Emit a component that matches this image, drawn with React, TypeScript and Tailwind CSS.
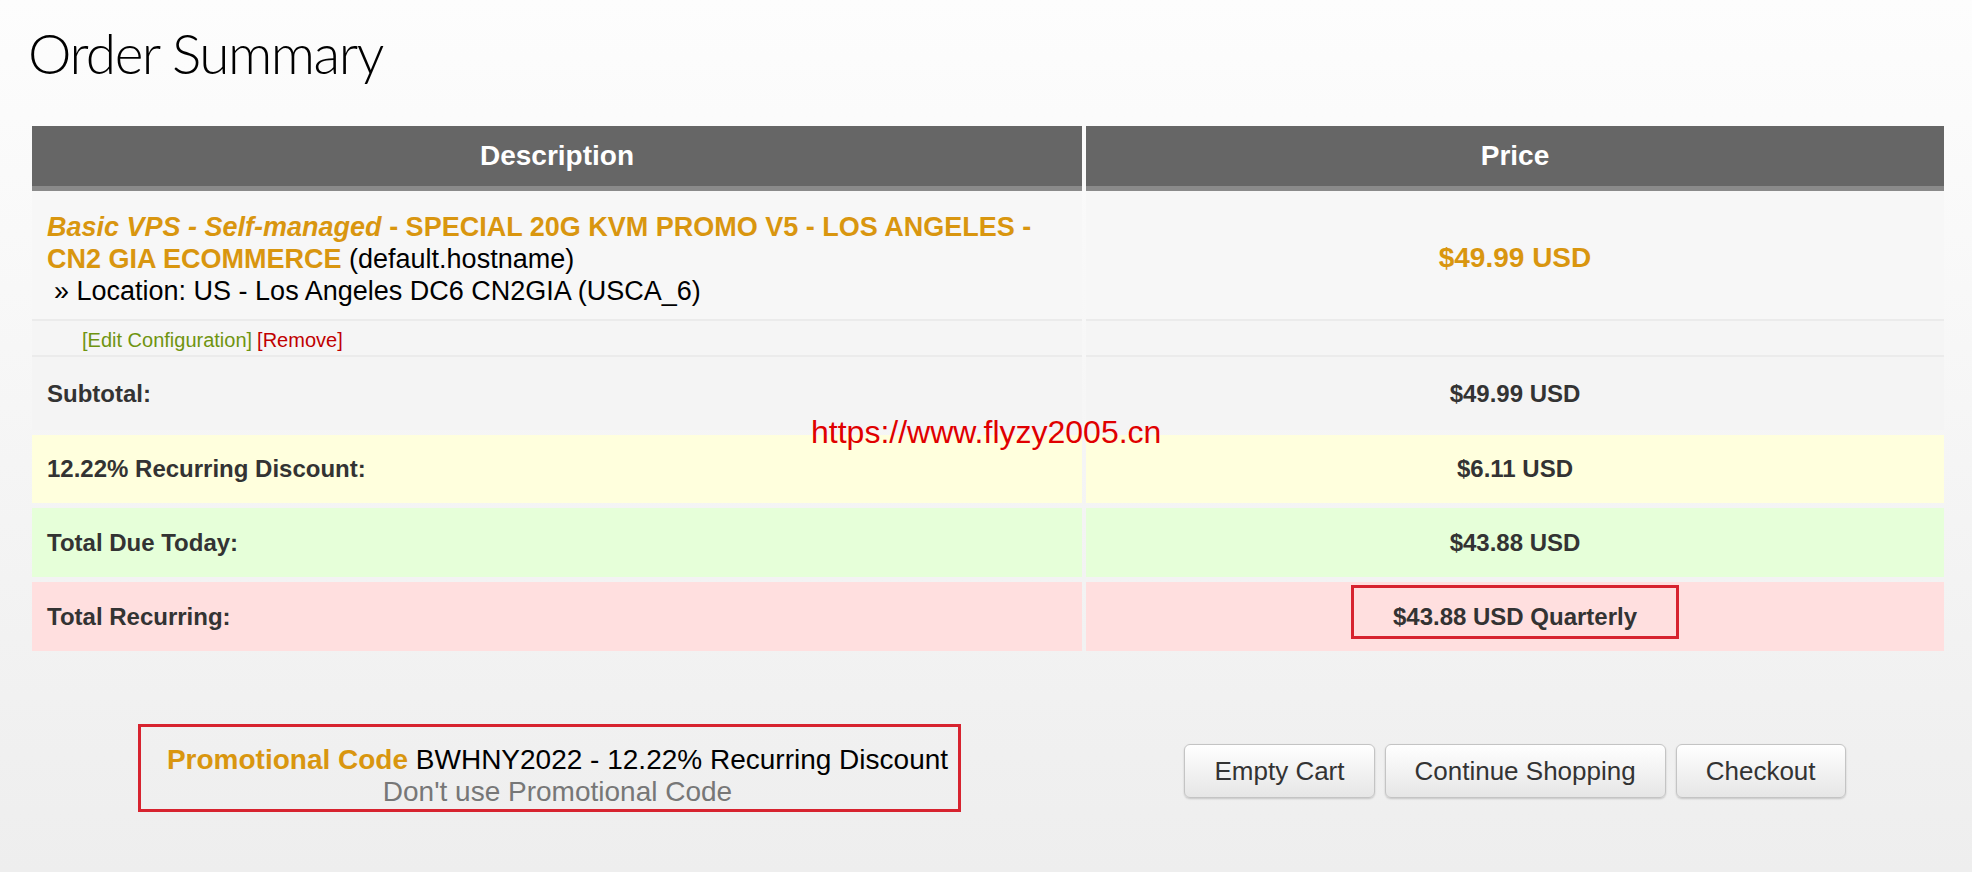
import React from "react";

const sans = { fontFamily: '"Liberation Sans", Arial, sans-serif' } as const;

export default function App() {
  return (
    <div
      className="relative min-h-[872px] w-[1972px] bg-gradient-to-b from-[#fdfdfd] to-[#eeeeee] pl-[32px] pr-[28px] pt-[26px] text-[#333]"
      style={sans}
    >
      <h1
        className="-ml-[4px] text-[55px] font-light leading-none tracking-[-1.5px] text-black"
        style={{ fontFamily: 'Lato, "Liberation Sans", sans-serif' }}
      >
        Order Summary
      </h1>

      <div className="mt-[45px] grid grid-cols-[1050px_858px] gap-x-[4px]">
        {/* header */}
        <div className="flex h-[65px] items-center justify-center border-b-[5px] border-[#8a8a8a] bg-[#666666] text-[28px] font-bold text-white">
          Description
        </div>
        <div className="flex h-[65px] items-center justify-center border-b-[5px] border-[#8a8a8a] bg-[#666666] text-[28px] font-bold text-white">
          Price
        </div>

        {/* product row */}
        <div className="h-[130px] border-b-2 border-[#ebebeb] bg-[#f7f7f7] pl-[15px] pr-[10px] pt-[20px] text-[27px] leading-[32px] text-black">
          <div>
            <span className="font-bold text-[#d9960f]">
              <i>Basic VPS - Self-managed</i> - SPECIAL 20G KVM PROMO V5 - LOS ANGELES - CN2 GIA ECOMMERCE
            </span>{" "}
            (default.hostname)
          </div>
          <div className="pl-[7px]">» Location: US - Los Angeles DC6 CN2GIA (USCA_6)</div>
        </div>
        <div className="flex h-[130px] items-center justify-center border-b-2 border-[#ebebeb] bg-[#f7f7f7] pt-[6px] text-[28px] font-bold text-[#d9960f]">
          $49.99 USD
        </div>

        {/* edit row */}
        <div className="flex h-[36px] items-center border-b-2 border-[#ebebeb] bg-[#f5f5f5] pl-[50px] pt-[3px] text-[20px]">
          <span className="text-[#6f9410]">[Edit Configuration]</span>
          <span className="ml-[5px] text-[#c00000]">[Remove]</span>
        </div>
        <div className="h-[36px] border-b-2 border-[#ebebeb] bg-[#f5f5f5]" />

        {/* subtotal */}
        <div className="flex h-[73px] items-center bg-[#f4f4f4] pl-[15px] text-[24px] font-bold">Subtotal:</div>
        <div className="flex h-[73px] items-center justify-center bg-[#f4f4f4] text-[24px] font-bold">$49.99 USD</div>

        {/* discount */}
        <div className="mt-[5px] flex h-[68px] items-center bg-[#ffffdd] pl-[15px] text-[24px] font-bold">
          12.22% Recurring Discount:
        </div>
        <div className="mt-[5px] flex h-[68px] items-center justify-center bg-[#ffffdd] text-[24px] font-bold">$6.11 USD</div>

        {/* total due */}
        <div className="mt-[5px] flex h-[69px] items-center bg-[#e6ffd9] pl-[15px] text-[24px] font-bold">Total Due Today:</div>
        <div className="mt-[5px] flex h-[69px] items-center justify-center bg-[#e6ffd9] text-[24px] font-bold">$43.88 USD</div>

        {/* total recurring */}
        <div className="mt-[5px] flex h-[69px] items-center bg-[#ffdfdf] pl-[15px] text-[24px] font-bold">Total Recurring:</div>
        <div className="mt-[5px] flex h-[69px] items-center justify-center bg-[#ffdfdf] text-[24px] font-bold">
          <span className="mb-[10px] border-[3px] border-[#d7232f] px-[39px] pb-[5px] pt-[15px] leading-[28px]">
            $43.88 USD Quarterly
          </span>
        </div>

        {/* bottom */}
        <div className="mt-[73px] flex justify-center">
          <div className="mr-[15px] border-[3px] border-[#d7232f] pb-[1px] pl-[26px] pr-[10px] pt-[17px] text-center text-[28px] leading-[32px]">
            <div>
              <span className="font-bold text-[#d9960f]">Promotional Code</span>
              <span className="text-black"> BWHNY2022 - 12.22% Recurring Discount</span>
            </div>
            <div className="text-[#777]">Don't use Promotional Code</div>
          </div>
        </div>
        <div className="mt-[93px] flex items-start justify-center gap-[10px]">
          {["Empty Cart", "Continue Shopping", "Checkout"].map((t) => (
            <button
              key={t}
              className="h-[54px] rounded-[6px] border border-[#c4c4c4] bg-gradient-to-b from-white to-[#e6e6e6] px-[29px] text-[26px] text-[#333] shadow-[0_1px_2px_rgba(0,0,0,0.18)]"
            >
              {t}
            </button>
          ))}
        </div>
      </div>

      {/* watermark overlay */}
      <div className="absolute left-[811px] top-[414px] text-[32px] leading-[36px] text-[#e00000]">
        https://www.flyzy2005.cn
      </div>
    </div>
  );
}
